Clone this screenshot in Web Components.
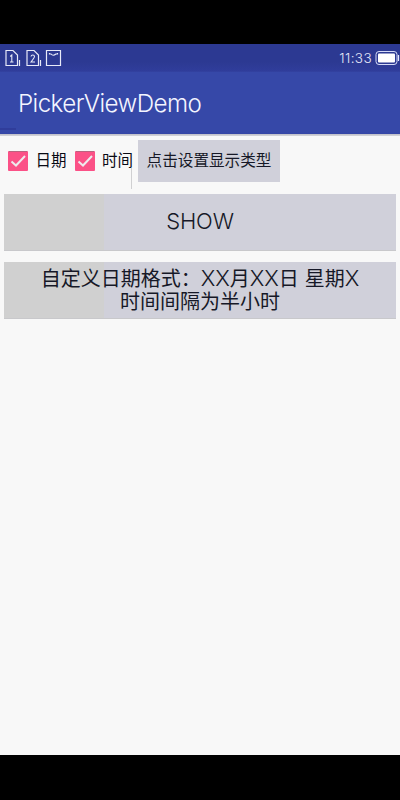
<!DOCTYPE html>
<html lang="zh"><head><meta charset="utf-8"><title>PickerViewDemo</title>
<style>html,body{margin:0;background:#000}</style></head><body>
<phone-screen>
  <status-bar slot="top">11:33</status-bar>
  <app-bar slot="top">PickerViewDemo</app-bar>
  <option-row><check-item>日期</check-item><check-item class="second">时间</check-item><grey-button class="small">点击设置显示类型</grey-button></option-row>
  <grey-button class="wide"><latin-text>SHOW</latin-text></grey-button>
  <grey-button class="wide custom">自定义日期格式：<latin-text>XX</latin-text>月<latin-text>XX</latin-text>日<latin-text> </latin-text>星期<latin-text>X</latin-text><br>时间间隔为半小时</grey-button>
</phone-screen>
<script>
function define(name, html) {
  customElements.define(name, class extends HTMLElement {
    constructor() { super(); this.attachShadow({mode: 'open'}).innerHTML = html; }
  });
}
define('phone-screen', `<style>
:host{display:flex;flex-direction:column;box-sizing:border-box;width:400px;height:800px;padding:44px 0 45px;background:#000;color:#161827;font-family:Inter,"Noto Sans CJK SC",sans-serif;font-weight:400;overflow:hidden}
main{flex:1;background:#f8f8f8;border-top:1px solid #c4c4cc;box-sizing:border-box;box-shadow:inset 0 1px #d0d0d6}
</style><slot name="top"></slot><main><slot></slot></main>`);
define('status-bar', `<style>
:host{display:flex;justify-content:space-between;height:28px;background:linear-gradient(#2c3992 0 18px,#303d9b 27px,#3444a2);color:#e4e6f8;font:300 13.5px/28px Inter,sans-serif}
.right{display:flex;letter-spacing:.4px}svg{display:block}
</style><svg width="70" height="28" fill="none" stroke="#e8eaf8" stroke-width="1.2">
<path d="M6 6.5h7l4.500 4.500v10.500h-11.500z"/><path d="M10.200 12.500l1.600-1.500v7m-1.800 0h3.500" stroke-width="1.1"/><path d="M19.500 16v6"/>
<path d="M27 6.500h7l4.500 4.500v10.500h-11.500z"/><path d="M31 12.500q.2-1.500 1.800-1.500t1.700 1.500q0 1-3.500 5.500h4" stroke-width="1.1"/><path d="M40.500 16v6"/>
<path d="M46.500 6.500h14v15h-14z"/><path d="M49.500 9v1h1.500q2 2.500 5 0h1.500v-1"/></svg>
<div class="right"><slot></slot><svg width="28" height="28"><rect x="4" y="7.500" width="21" height="13" rx="3" fill="none" stroke="#d5daf7"/><rect x="6" y="9.500" width="17" height="9" rx="1" fill="#fff"/><path d="M26.500 11v6" stroke="#e5e8ff" stroke-width="1.200"/></svg></div>`);
define('app-bar', `<style>:host{display:block;height:62px;box-sizing:border-box;padding:1px 0 0 18px;background:linear-gradient(#303d9b,#303d9b) 0 56px/16px 2px no-repeat,linear-gradient(#3648a8 0 60px,#3445a5);color:#f4f5ff;font:300 24.200px/61px Inter,sans-serif;letter-spacing:-.58px}</style><slot></slot>`);
define('option-row', `<style>:host{display:flex;height:59px;box-sizing:border-box;padding:5px 0 0 8px;background:linear-gradient(#d0d0d2,#d0d0d2) 131px 33px/1px 21px no-repeat}::slotted(.small){margin-left:-3px}</style><slot></slot>`);
define('check-item', `<style>:host{display:flex;align-items:center;width:66.500px;height:42px;font-size:15.500px;color:#080a14}svg{margin-right:7.500px;flex:none}span{white-space:nowrap;margin-top:-4px}</style>
<svg width="20" height="20"><rect width="20" height="20" rx="1" fill="#fb5187"/><path d="M1 .5h18" stroke="#b96580"/><path d="M3.500 10.500l4.500 4 9-9.500" fill="none" stroke="#eeeaed" stroke-width="2"/></svg><span><slot></slot></span>`);
define('grey-button', `<style>
:host{display:flex;align-items:center;justify-content:center;text-align:center;background:#d0d0da;box-sizing:border-box;white-space:nowrap;font-size:20px;line-height:23px}
:host(.small){width:142px;height:42px;font-size:15.600px;padding-bottom:1px}
:host(.wide){height:57px;margin:0 4px 11px;padding-bottom:2px;background:linear-gradient(#d0d0d0,#d0d0d0) 0 0/100px 100% no-repeat #d0d0da;box-shadow:inset 0 -1px #c8c8cb}
:host(.custom){padding-bottom:1px}
</style><div><slot></slot></div>`);
define('latin-text', `<style>:host{font:300 22px/22px Inter,sans-serif;letter-spacing:-.1px}</style><slot></slot>`);
</script></body></html>
